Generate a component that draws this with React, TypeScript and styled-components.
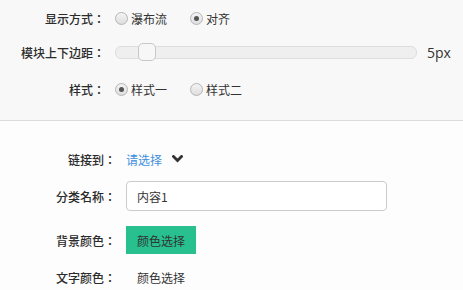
import React, { useState } from 'react';
import styled, { createGlobalStyle } from 'styled-components';

const GlobalStyle = createGlobalStyle`
  html, body {
    margin: 0;
    padding: 0;
    background: #fdfdfd;
  }
  body {
    font-family: "Noto Sans CJK SC", "Noto Sans", sans-serif;
    font-size: 12px;
    color: #333;
  }
`;

const Page = styled.div`
  width: 463px;
  height: 290px;
  overflow: hidden;
  display: flex;
  flex-direction: column;
`;

const TopPanel = styled.div`
  flex-shrink: 0;
  background: #f8f8f8;
  border-bottom: 1px solid #dcdcdc;
  height: 121px;
  box-sizing: border-box;
  padding-top: 6px;
  display: flex;
  flex-direction: column;
`;

const BottomPanel = styled.div`
  flex-shrink: 0;
  background: #fdfdfd;
  padding-top: 23px;
  display: flex;
  flex-direction: column;
`;

const Row = styled.div<{ $height: number }>`
  display: flex;
  align-items: center;
  height: ${p => p.$height}px;
`;

const Label = styled.div<{ $width: number }>`
  width: ${p => p.$width}px;
  flex-shrink: 0;
  text-align: right;
  margin-right: 10px;
  color: #2b2b2b;
  font-family: "Noto Sans CJK JP", "Noto Sans CJK SC", sans-serif;
  font-weight: 500;
  white-space: nowrap;
`;

const RadioGroup = styled.div`
  display: flex;
  align-items: center;
`;

const RadioOption = styled.label`
  display: flex;
  align-items: center;
  width: 75px;
  cursor: pointer;
  color: #333;
`;

const RadioCircle = styled.span<{ $checked: boolean }>`
  width: 11px;
  height: 11px;
  border-radius: 50%;
  border: 1px solid #b5b5b5;
  background: linear-gradient(#f4f4f4, #dedede);
  margin-right: 3px;
  display: flex;
  align-items: center;
  justify-content: center;

  &::after {
    content: '';
    display: ${p => (p.$checked ? 'block' : 'none')};
    width: 5px;
    height: 5px;
    border-radius: 50%;
    background: #555;
  }
`;

const SliderWrap = styled.div`
  display: flex;
  align-items: center;
`;

const Track = styled.div`
  position: relative;
  width: 300px;
  height: 11px;
  border: 1px solid #dedede;
  border-radius: 6px;
  background: #efefef;
`;

const Thumb = styled.div`
  position: absolute;
  top: -4px;
  width: 16px;
  height: 16px;
  border: 1px solid #c8c8c8;
  border-radius: 5px;
  background: #f7f7f7;
`;

const SliderValue = styled.span`
  margin-left: 10px;
  font-family: "Open Sans", "Noto Sans", sans-serif;
  font-size: 14px;
  color: #333;
`;

const SelectLink = styled.a`
  color: #3d8fdf;
  text-decoration: none;
  display: flex;
  align-items: center;
  cursor: pointer;

  svg {
    margin-left: 10px;
  }
`;

const TextInput = styled.input`
  width: 261px;
  height: 30px;
  box-sizing: border-box;
  border: 1px solid #cbcbcb;
  border-radius: 4px;
  padding: 0 10px;
  font-family: "Noto Sans CJK SC", "Noto Sans", sans-serif;
  font-size: 12px;
  color: #333;
  background: #fff;
  outline: none;
`;

const ColorButton = styled.button<{ $bg?: string }>`
  width: 70px;
  height: 28px;
  border: none;
  padding: 0;
  font-family: "Noto Sans CJK SC", "Noto Sans", sans-serif;
  font-size: 12px;
  color: #333;
  background: ${p => p.$bg || 'transparent'};
  cursor: pointer;
`;

const Chevron = () => (
  <svg width="11" height="8" viewBox="0 0 11 8">
    <polyline points="1.5,1.5 5.5,5.5 9.5,1.5" fill="none" stroke="#333" strokeWidth="2.8" strokeLinecap="square" />
  </svg>
);

const Radio = ({ label, checked, onClick }: { label: string; checked: boolean; onClick: () => void }) => (
  <RadioOption onClick={onClick}>
    <RadioCircle $checked={checked} />
    {label}
  </RadioOption>
);

export default function App() {
  const [layout, setLayout] = useState('align');
  const [style, setStyle] = useState('one');
  const [name, setName] = useState('内容1');
  const margin = 5;

  return (
    <Page>
      <GlobalStyle />
      <TopPanel>
        <Row $height={24}>
          <Label $width={105}>显示方式：</Label>
          <RadioGroup>
            <Radio label="瀑布流" checked={layout === 'waterfall'} onClick={() => setLayout('waterfall')} />
            <Radio label="对齐" checked={layout === 'align'} onClick={() => setLayout('align')} />
          </RadioGroup>
        </Row>
        <Row $height={44}>
          <Label $width={105}>模块上下边距：</Label>
          <SliderWrap>
            <Track>
              <Thumb style={{ left: `${margin * 4 + 2}px` }} />
            </Track>
            <SliderValue>{margin}px</SliderValue>
          </SliderWrap>
        </Row>
        <Row $height={30}>
          <Label $width={105}>样式：</Label>
          <RadioGroup>
            <Radio label="样式一" checked={style === 'one'} onClick={() => setStyle('one')} />
            <Radio label="样式二" checked={style === 'two'} onClick={() => setStyle('two')} />
          </RadioGroup>
        </Row>
      </TopPanel>
      <BottomPanel>
        <Row $height={30}>
          <Label $width={116}>链接到：</Label>
          <SelectLink>
            请选择
            <Chevron />
          </SelectLink>
        </Row>
        <Row $height={44}>
          <Label $width={116}>分类名称：</Label>
          <TextInput value={name} onChange={e => setName(e.target.value)} />
        </Row>
        <Row $height={44}>
          <Label $width={116}>背景颜色：</Label>
          <ColorButton $bg="#27c08e">颜色选择</ColorButton>
        </Row>
        <Row $height={30}>
          <Label $width={116}>文字颜色：</Label>
          <ColorButton>颜色选择</ColorButton>
        </Row>
      </BottomPanel>
    </Page>
  );
}
